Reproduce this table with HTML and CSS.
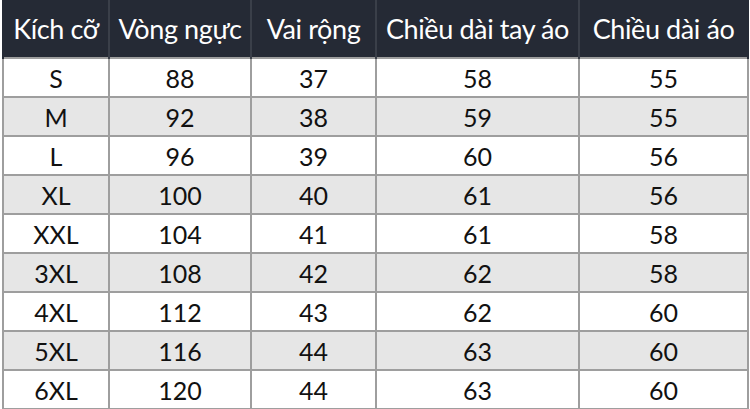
FILE: index.html
```html
<!DOCTYPE html>
<html lang="vi">
<head>
<meta charset="utf-8">
<link rel="stylesheet" href="styles.css">
</head>
<body>
<table class="size-table">
  <colgroup>
    <col class="c1"><col class="c2"><col class="c3"><col class="c4"><col class="c5">
  </colgroup>
  <thead>
    <tr><th>Kích cỡ</th><th>Vòng ngực</th><th>Vai rộng</th><th>Chiều dài tay áo</th><th>Chiều dài áo</th></tr>
  </thead>
  <tbody>
    <tr><td>S</td><td>88</td><td>37</td><td>58</td><td>55</td></tr>
    <tr class="alt"><td>M</td><td>92</td><td>38</td><td>59</td><td>55</td></tr>
    <tr><td>L</td><td>96</td><td>39</td><td>60</td><td>56</td></tr>
    <tr class="alt"><td>XL</td><td>100</td><td>40</td><td>61</td><td>56</td></tr>
    <tr><td>XXL</td><td>104</td><td>41</td><td>61</td><td>58</td></tr>
    <tr class="alt"><td>3XL</td><td>108</td><td>42</td><td>62</td><td>58</td></tr>
    <tr><td>4XL</td><td>112</td><td>43</td><td>62</td><td>60</td></tr>
    <tr class="alt"><td>5XL</td><td>116</td><td>44</td><td>63</td><td>60</td></tr>
    <tr><td>6XL</td><td>120</td><td>44</td><td>63</td><td>60</td></tr>
  </tbody>
</table>
</body>
</html>
```
FILE: styles.css
```css
html, body {
  margin: 0;
  padding: 0;
  background: #ffffff;
}
body {
  width: 750px;
  height: 409px;
  overflow: hidden;
  font-family: Lato, "Noto Sans", sans-serif;
}
.size-table {
  margin-left: 2px;
  width: 745px;
  border-collapse: collapse;
  table-layout: fixed;
}
.c1 { width: 106px; }
.c2 { width: 142px; }
.c3 { width: 125px; }
.c4 { width: 203px; }
.c5 { width: 169px; }
.size-table th {
  background: #252a35;
  color: #ffffff;
  font-weight: 400;
  font-size: 27px;
  letter-spacing: -0.4px;
  height: 57px;
  padding: 0;
  text-align: center;
  border-left: 2px solid #3a3f49;
  border-right: 2px solid #3a3f49;
}
.size-table th:first-child { border-left-color: #252a35; }
.size-table th:last-child { border-right-color: #252a35; }
.size-table td {
  height: 37px;
  padding: 0;
  text-align: center;
  font-size: 25px;
  color: #111111;
  border: 2px solid #9e9e9e;
  background: #ffffff;
}
.size-table tr.alt td {
  background: #e6e6e6;
}
```
